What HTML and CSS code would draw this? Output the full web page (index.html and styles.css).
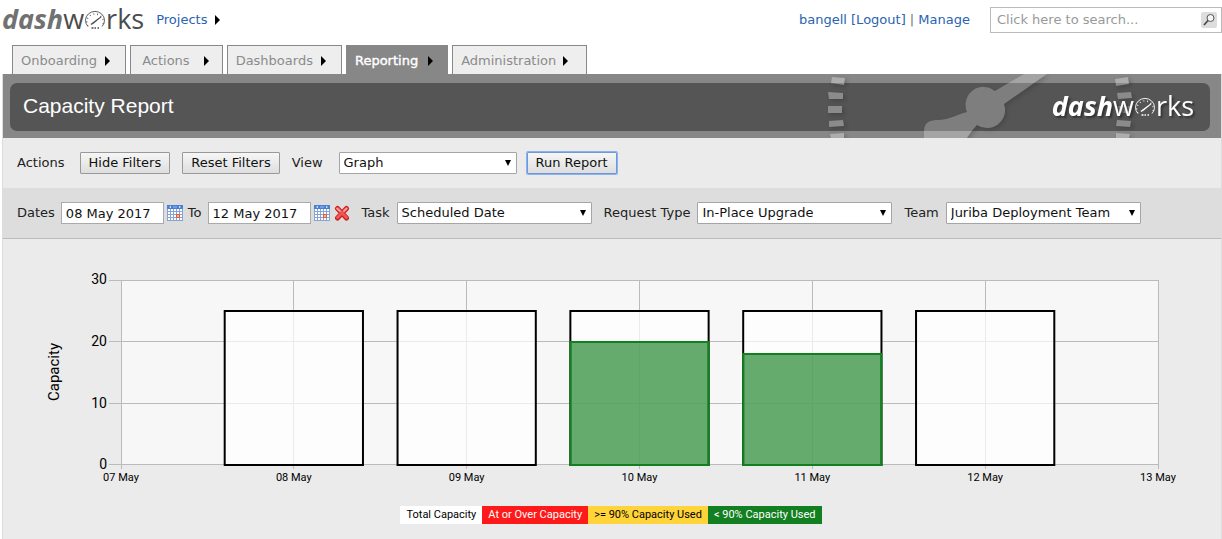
FILE: index.html
```html
<!DOCTYPE html>
<html lang="en">
<head>
<meta charset="utf-8">
<title>Capacity Report</title>
<link rel="stylesheet" href="styles.css">
</head>
<body>
<svg class="defs" aria-hidden="true">
  <symbol id="gauge" viewBox="0 0 22 22">
    <path d="M4 18.500A9.500 9 0 1 1 18 18.500" fill="none" stroke="currentColor" stroke-width=".9"/>
    <path d="M3.800 18A8.300 8 0 1 1 18.200 18" fill="none" stroke="currentColor" stroke-width="1.400" stroke-dasharray=".8 3"/>
    <path d="M6.500 16 17 8.300 17.400 9.200 9.800 15.500 7.300 17Z" fill="currentColor"/>
    <path d="M7.500 20h2M10.500 20h1.500M13.500 20h1.500" stroke="currentColor" stroke-width="1.600"/>
  </symbol>
  <symbol id="calendar" viewBox="0 0 16 16">
    <path d="M0 0h16v16H0z" fill="#86a3d4"/>
    <path d="M0 0h16v4H0z" fill="#4a7fd6"/>
    <path d="M2 2l2-1v2zM14 2l-2-1v2z" fill="#fff"/>
    <path d="M6 2h4" stroke="#9bbcf0"/>
    <path d="M1 4h2v2H1zM4 4h2v2H4zM7 4h2v2H7zM10 4h2v2h-2zM13 4h2v2h-2zM1 7h2v2H1zM4 7h2v2H4zM7 7h2v2H7zM10 7h2v2h-2zM13 7h2v2h-2zM1 10h2v2H1zM4 10h2v2H4zM7 10h2v2H7zM13 10h2v2h-2zM1 13h2v2H1zM4 13h2v2H4zM7 13h2v2H7zM10 13h2v2h-2zM13 13h2v2h-2z" fill="#fff"/>
    <path d="M9.500 9.500h3v3h-3z" fill="#f6b7a0" stroke="#e35b38"/>
  </symbol>
</svg>

<header class="top">
  <a class="logo" href="#" aria-label="dashworks"><b>dash</b><span>w</span><svg class="gauge"><use href="#gauge"/></svg><span>rks</span></a>
  <a class="projects" href="#">Projects <i class="arrow"></i></a>
  <div class="account"><a href="#">bangell [Logout]</a> | <a href="#">Manage</a></div>
  <form class="search">
    <input type="text" aria-label="Search" placeholder="Click here to search...">
    <button type="button" aria-label="Search"><svg viewBox="0 0 16 16"><circle cx="9.500" cy="6" r="3.500" fill="#f5f5f5" stroke="#555"/><path d="M7 8.500 3 13" stroke="#444" stroke-width="1.600"/></svg></button>
  </form>
</header>

<nav class="tabs">
  <a class="tab" href="#">Onboarding <i class="arrow"></i></a>
  <a class="tab short" href="#">Actions <i class="arrow"></i></a>
  <a class="tab" href="#">Dashboards <i class="arrow"></i></a>
  <a class="tab active" href="#">Reporting <i class="arrow"></i></a>
  <a class="tab wide" href="#">Administration <i class="arrow"></i></a>
</nav>

<main class="page">
  <div class="banner">
    <div class="title-bar">
      <h1>Capacity Report</h1>
      <div class="logo light"><b>dash</b><span>w</span><svg class="gauge"><use href="#gauge"/></svg><span>rks</span></div>
    </div>
    <svg class="dial" viewBox="0 0 400 64" aria-hidden="true">
      <g class="dial-ticks">
        <path d="M11 3l13 1-1 7-13-2zM7 18l15 1v6H8zM7 32h14v7H7zM8 47l14-1 1 6-15 1zM9 60l14-1v5H10z"/>
        <path d="M294 5l13-2 1 7-13 2zM296 19l14-1 1 6-14 1zM296 32h14v7h-14zM296 46l14 1-1 6-14-1zM295 59l14 1-1 4h-13z"/>
      </g>
      <path class="dial-needle" d="M103 64V57Q103 46 116 46C129 46 139 39 146 38A18 18 0 0 1 174 17L203 0H226L183 30A18 18 0 0 1 156 51Q150 57 146 64Z"/>
    </svg>
  </div>

  <form class="row actions">
    <span class="lead">Actions</span>
    <button class="btn" type="button">Hide Filters</button>
    <button class="btn" type="button">Reset Filters</button>
    <label class="view" for="view">View</label>
    <span class="select graph"><select id="view"><option>Graph</option></select></span>
    <button class="btn focus" type="button">Run Report</button>
  </form>

  <form class="row filters">
    <span class="field"><label for="from">Dates</label><input id="from" type="text" value="08 May 2017"></span>
    <svg class="icon"><use href="#calendar"/></svg>
    <span class="field"><label for="to">To</label><input id="to" type="text" value="12 May 2017"></span>
    <svg class="icon"><use href="#calendar"/></svg>
    <svg class="icon cross" viewBox="0 0 16 16"><path d="M3.500 3.500 12.500 13M12.500 3.500 3.500 13" stroke="#c92020" stroke-width="5" stroke-linecap="round"/><path d="M3.500 3.500 12.500 12.500M12.500 3.500 3.500 12.500" stroke="#ee5555" stroke-width="3" stroke-linecap="round"/><path d="M3 3.500 6 6M12.500 3.500 10 6" stroke="#ffb0b0" stroke-width="1.500" stroke-linecap="round"/></svg>
    <span class="field group"><label for="task">Task</label><span class="select medium"><select id="task"><option>Scheduled Date</option></select></span></span>
    <span class="field group"><label for="type">Request Type</label><span class="select medium"><select id="type"><option>In-Place Upgrade</option></select></span></span>
    <span class="field group"><label for="team">Team</label><span class="select medium"><select id="team"><option>Juriba Deployment Team</option></select></span></span>
  </form>

  <section class="report">
    <svg class="chart" role="img" aria-label="Capacity by day">
      <rect class="plot" width="100%" height="185"/>
      <path class="grid" d="M-12 .5H0M-12 61.500H0M-12 123.500H0M-12 184.500H0"/>
      <g class="grid">
        <line x2="100%" y1=".5" y2=".5"/><line x2="100%" y1="61.500" y2="61.500"/><line x2="100%" y1="123.500" y2="123.500"/><line x2="100%" y1="184.500" y2="184.500"/>
        <line x1="0" x2="0" y2="189"/><line x1="16.667%" x2="16.667%" y2="189"/><line x1="33.333%" x2="33.333%" y2="189"/><line x1="50%" x2="50%" y2="189"/><line x1="66.667%" x2="66.667%" y2="189"/><line x1="83.333%" x2="83.333%" y2="189"/><line x1="100%" x2="100%" y2="189"/>
      </g>
      <g class="total">
        <rect x="10%" y="31" width="13.333%" height="154"/>
        <rect x="26.667%" y="31" width="13.333%" height="154"/>
        <rect x="43.333%" y="31" width="13.333%" height="154"/>
        <rect x="60%" y="31" width="13.333%" height="154"/>
        <rect x="76.667%" y="31" width="13.333%" height="154"/>
      </g>
      <g class="used">
        <rect x="43.333%" y="62" width="13.333%" height="123"/>
        <rect x="60%" y="74" width="13.333%" height="111"/>
      </g>
      <g class="y-labels">
        <text x="-14" y="4">30</text><text x="-14" y="66">20</text><text x="-14" y="128">10</text><text x="-14" y="189">0</text>
      </g>
      <text class="axis-title" transform="translate(-62 92) rotate(-90)">Capacity</text>
      <g class="x-labels">
        <text x="0" y="201">07 May</text><text x="16.667%" y="201">08 May</text><text x="33.333%" y="201">09 May</text><text x="50%" y="201">10 May</text><text x="66.667%" y="201">11 May</text><text x="83.333%" y="201">12 May</text><text x="100%" y="201">13 May</text>
      </g>
    </svg>
    <div class="legend">
      <span class="key">Total Capacity</span><span class="key over">At or Over Capacity</span><span class="key near">&gt;= 90% Capacity Used</span><span class="key under">&lt; 90% Capacity Used</span>
    </div>
  </section>
</main>
</body>
</html>
```

FILE: styles.css
```css
* { box-sizing: border-box; }
body {
  margin: 0;
  background: #fff;
  color: #222;
  font: 13px/16px "DejaVu Sans", sans-serif;
}
a { color: #2a63b0; text-decoration: none; }
input, select, button { font: inherit; color: #111; margin: 0; }
.defs { position: absolute; width: 0; height: 0; }

.arrow {
  display: inline-block;
  border-left: 5px solid #000;
  border-top: 5px solid transparent;
  border-bottom: 5px solid transparent;
}

.logo {
  display: flex;
  align-items: center;
  color: #4c4c4c;
  font: 27px/32px "Open Sans", sans-serif;
}
.logo b { color: #717171; font-style: italic; }
.gauge { width: 22px; height: 22px; }
.logo.light, .logo.light b { color: #fff; }
.logo.light { text-shadow: 2px 2px 2px #333; }

.top {
  display: flex;
  align-items: center;
  height: 40px;
  padding-left: 2px;
}
.top .logo { padding-bottom: 2px; }
.projects { display: flex; align-items: center; gap: 8px; margin-left: 12px; }
.account { margin-left: auto; color: #777; }
.search {
  display: flex;
  align-items: center;
  width: 232px;
  height: 26px;
  margin-left: 20px;
  padding-right: 4px;
  border: 1px solid #bbb;
}
.search input { flex: 1; min-width: 0; border: 0; padding: 0 6px; background: none; outline: 0; }
.search input::placeholder { color: #999; opacity: 1; }
.search button {
  width: 16px;
  height: 16px;
  padding: 0;
  border: 0;
  border-radius: 2px;
  background: #ddd;
}
.search svg { display: block; }

.tabs { display: flex; gap: 4px; padding: 5px 0 0 12px; }
.tab {
  display: flex;
  align-items: center;
  gap: 8px;
  height: 29px;
  padding: 2px 15px 0 8px;
  border: 1px solid #888;
  border-bottom: 0;
  background: #eee;
  color: #8b8b8b;
}
.tab.short { gap: 14px; padding: 2px 13px 0 11px; }
.tab.wide { gap: 7px; padding-right: 18px; }
.tab.active { gap: 10px; padding-right: 14px; background: #878787; color: #fff; -webkit-text-stroke: .4px #fff; }

.page { margin: 0 0 0 2px; border: 1px solid #ddd; border-width: 0 1px; background: #ebebeb; }
.banner { position: relative; padding: 9px 11px 7px 7px; background: #878787; }
.title-bar {
  display: flex;
  align-items: center;
  justify-content: space-between;
  height: 48px;
  padding: 0 16px 2px 13px;
  border-radius: 7px;
  background: #555;
}
.title-bar h1 {
  margin: 0;
  color: #fff;
  font: 21px/24px "Liberation Sans", sans-serif;
}
.title-bar .logo { position: relative; z-index: 1; }
.dial { position: absolute; top: 0; right: 0; width: 400px; height: 64px; }
.dial path { fill: #fff; filter: drop-shadow(2px 2px 2px #222); }
.dial-ticks { opacity: .32; }
.dial-needle { opacity: .24; }

.row { display: flex; align-items: center; height: 50px; padding-left: 14px; }
.btn {
  height: 22px;
  padding: 0 8px;
  border: 1px solid #999;
  border-radius: 1px;
  background: linear-gradient(#f6f6f6, #dedede);
  line-height: 16px;
}
.btn + .btn { margin-left: 12px; }
.lead { margin-right: 15px; }
.view { margin: 0 16px 0 12px; }
.btn.focus { margin-left: 10px; border-color: #6c98de; box-shadow: 0 0 0 1px #8db1ea; }

.select { position: relative; display: inline-flex; }
.select::after {
  content: "";
  position: absolute;
  top: 8px;
  right: 6px;
  border: 3px solid transparent;
  border-top: 6px solid #000;
  border-bottom: 0;
  pointer-events: none;
}
.select select {
  width: 100%;
  height: 22px;
  padding: 0 4px;
  appearance: none;
  border: 1px solid #a5a5a5;
  border-radius: 1px;
  background: #fff;
}
.graph { width: 178px; }
.medium { width: 195px; }

.filters { height: 51px; background: #ddd; border-bottom: 1px solid #bbb; }
.field { display: flex; align-items: center; gap: 6px; }
.field input { width: 103px; height: 22px; padding: 0 4px; border: 1px solid #aaa; background: #fff; }
.icon { width: 16px; height: 16px; margin: 0 5px 0 3px; flex: none; }
.icon.cross { margin: 0; margin-left: -1px; }
.group { margin-left: 12px; gap: 7px; }

.report { padding: 41px 63px 16px 118px; font-family: Roboto, sans-serif; color: #000; }
.chart { display: block; width: 100%; height: 205px; overflow: visible; }
.plot { fill: #f7f7f7; }
.grid { stroke: #bbb; fill: none; shape-rendering: crispEdges; }
.total rect { fill: #fff; fill-opacity: .7; stroke: #000; stroke-width: 2; }
.used rect { fill: #128020; fill-opacity: .65; stroke: #128020; stroke-width: 2; }
.y-labels text { font-size: 14px; text-anchor: end; }
.axis-title { font-size: 15px; text-anchor: middle; }
.x-labels text { font-size: 11px; text-anchor: middle; }

.legend { display: flex; justify-content: center; margin: 21px 57px 0 0; }
.key { padding: 0 6px; background: #fff; font-size: 11px; line-height: 18px; white-space: nowrap; }
.over { background: #ff1a1a; color: #fff; }
.near { background: #ffd43a; }
.under { background: #128020; color: #fff; }
```
